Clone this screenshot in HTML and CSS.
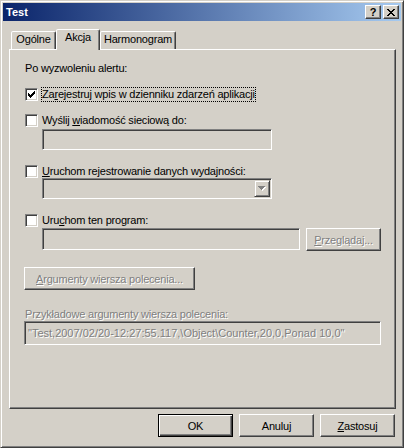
FILE: index.html
```
<!DOCTYPE html>
<html lang="pl">
<head>
    <meta charset="UTF-8">
    <title>Test</title>
    <link rel="stylesheet" href="styles.css">
</head>
<body>
    <div class="window">
        <div class="titlebar">
            <span class="title">Test</span>
            <div class="caption-buttons">
                <button class="cap-btn">?</button>
                <button class="cap-btn">
                    <svg width="8" height="7" viewBox="0 0 8 7"><path d="M0 0h2v1h-2z M6 0h2v1h-2z M1 1h2v1h-2z M5 1h2v1h-2z M2 2h4v1h-4z M3 3h2v1h-2z M2 4h4v1h-4z M1 5h2v1h-2z M5 5h2v1h-2z M0 6h2v1h-2z M6 6h2v1h-2z" fill="#000"/></svg>
                </button>
            </div>
        </div>

        <div class="tabs">
            <div class="tab tab-general">Ogólne</div>
            <div class="tab tab-action active">Akcja</div>
            <div class="tab tab-schedule">Harmonogram</div>
        </div>

        <div class="panel">
            <div class="intro">Po wyzwoleniu alertu:</div>

            <div class="check first">
                <span class="box">
                    <svg width="7" height="7" viewBox="0 0 7 7"><path d="M0 2h1v3h-1z M1 3h1v3h-1z M2 4h1v3h-1z M3 3h1v3h-1z M4 2h1v3h-1z M5 1h1v3h-1z M6 0h1v3h-1z" fill="#000"/></svg>
                </span>
                <span class="check-label focused">Za<u>r</u>ejestruj wpis w dzienniku zdarzeń aplikacji</span>
            </div>

            <div class="check next">
                <span class="box"></span>
                <span class="check-label">Wyślij <u>w</u>iadomość sieciową do:</span>
            </div>
            <div class="field message-field"></div>

            <div class="check group">
                <span class="box"></span>
                <span class="check-label"><u>U</u>ruchom rejestrowanie danych wydajności:</span>
            </div>
            <div class="field combo">
                <span class="combo-btn">
                    <svg width="8" height="5" viewBox="0 0 8 5"><path d="M1 1h7v1h-1v1h-1v1h-1v1h-1v-1h-1v-1h-1v-1h-1z" fill="#fff"/><path d="M0 0h7v1h-1v1h-1v1h-1v1h-1v-1h-1v-1h-1v-1h-1z" fill="#808080"/></svg>
                </span>
            </div>

            <div class="check group">
                <span class="box"></span>
                <span class="check-label">Uru<u>c</u>hom ten program:</span>
            </div>
            <div class="program-row">
                <div class="field program-field"></div>
                <button class="btn" disabled><u>P</u>rzeglądaj...</button>
            </div>

            <button class="btn args-btn" disabled><u>A</u>rgumenty wiersza polecenia...</button>

            <div class="sample-label">Przykładowe argumenty wiersza polecenia:</div>
            <div class="field sample-field">"Test,2007/02/20-12:27:55.117,\Object\Counter,20,0,Ponad 10,0"</div>
        </div>

        <div class="actions">
            <button class="btn default">OK</button>
            <button class="btn">Anuluj</button>
            <button class="btn"><u>Z</u>astosuj</button>
        </div>
    </div>
</body>
</html>
```

FILE: styles.css
```
* {
    box-sizing: border-box;
}
body {
    margin: 0;
    font-family: 'Liberation Sans', Arial, sans-serif;
    font-size: 11px;
    letter-spacing: -0.2px;
    color: #000;
    background: #d4d0c8;
}
.window {
    width: 404px;
    height: 448px;
    padding: 2px;
    background: #d4d0c8;
    border: 1px solid;
    border-color: #d4d0c8 #404040 #404040 #d4d0c8;
    box-shadow: inset 1px 1px #fff, inset -1px -1px #808080;
}
.titlebar {
    height: 18px;
    display: flex;
    align-items: center;
    justify-content: space-between;
    padding: 0 2px 0 3px;
    background: linear-gradient(to right, #0a246a, #a6caf0);
}
.title {
    color: #fff;
    font-weight: bold;
    letter-spacing: 0;
}
.caption-buttons {
    display: flex;
    gap: 2px;
}
.cap-btn {
    width: 16px;
    height: 14px;
    padding: 0;
    display: flex;
    align-items: center;
    justify-content: center;
    background: #d4d0c8;
    border: 1px solid;
    border-color: #fff #404040 #404040 #fff;
    box-shadow: inset -1px -1px #808080;
    font: bold 11px 'Liberation Sans', Arial, sans-serif;
    line-height: 12px;
}

/* tab strip */
.tabs {
    display: flex;
    align-items: flex-end;
    height: 20px;
    margin: 8px 0 0 8px;
    position: relative;
    z-index: 1;
}
.tab {
    height: 18px;
    padding-top: 1px;
    line-height: 13px;
    text-align: center;
    background: #d4d0c8;
    border: 1px solid;
    border-bottom: none;
    border-color: #fff #404040 transparent #fff;
    border-radius: 2px 2px 0 0;
    box-shadow: inset -1px 0 #808080;
}
.tab-general { width: 45px; }
.tab-action { width: 44px; }
.tab-schedule { width: 76px; }
.tab.active {
    height: 21px;
    margin-bottom: -1px;
}

.panel {
    width: 387px;
    height: 360px;
    margin-left: 6px;
    padding-left: 15px;
    border: 1px solid;
    border-color: #fff #404040 #404040 #fff;
    box-shadow: inset -1px -1px #808080;
}
.intro {
    margin-top: 12px;
    line-height: 13px;
}

/* checkboxes */
.check {
    display: flex;
    align-items: center;
    height: 13px;
    gap: 3px;
}
.check.first { margin-top: 13px; }
.check.next { margin-top: 13px; }
.check.group { margin-top: 15px; }
.box {
    width: 13px;
    height: 13px;
    display: flex;
    align-items: center;
    justify-content: center;
    background: #fff;
    border: 1px solid;
    border-color: #808080 #fff #fff #808080;
    box-shadow: inset 1px 1px #404040, inset -1px -1px #d4d0c8;
}
.check-label {
    padding: 1px;
    line-height: 13px;
}
.check-label.focused {
    outline: 1px dotted #000;
    outline-offset: -1px;
}

/* sunken fields */
.field {
    height: 21px;
    background: #d4d0c8;
    border: 1px solid;
    border-color: #808080 #fff #fff #808080;
    box-shadow: inset 1px 1px #404040, inset -1px -1px #d4d0c8;
}
.message-field {
    width: 230px;
    margin: 2px 0 0 17px;
}
.combo {
    width: 230px;
    margin-left: 17px;
    padding: 1px;
    display: flex;
    justify-content: flex-end;
}
.combo-btn {
    width: 16px;
    height: 17px;
    display: flex;
    align-items: center;
    justify-content: center;
    border: 1px solid;
    border-color: #d4d0c8 #404040 #404040 #d4d0c8;
    box-shadow: inset 1px 1px #fff, inset -1px -1px #808080;
}
.program-row {
    display: flex;
    gap: 6px;
    margin: 1px 0 0 17px;
}
.program-field {
    width: 258px;
    height: 22px;
}

/* buttons */
.btn {
    width: 75px;
    height: 23px;
    padding: 0;
    font: 11px 'Liberation Sans', Arial, sans-serif;
    letter-spacing: -0.2px;
    color: #000;
    background: #d4d0c8;
    border: 1px solid;
    border-color: #fff #404040 #404040 #fff;
    box-shadow: inset -1px -1px #808080;
}
.btn:disabled {
    color: #808080;
    text-shadow: 1px 1px #fff;
}
.btn.default {
    border-color: #000;
    box-shadow: inset 1px 1px #fff, inset -1px -1px #404040, inset -2px -2px #808080;
}
.args-btn {
    display: block;
    width: 171px;
    margin: 16px 0 0 -1px;
}
.sample-label {
    margin-top: 18px;
    line-height: 13px;
    color: #808080;
    text-shadow: 1px 1px #fff;
}
.sample-field {
    width: 357px;
    height: 24px;
    margin-left: -1px;
    padding: 0 3px;
    line-height: 22px;
    letter-spacing: 0;
    color: #808080;
    text-shadow: 1px 1px #fff;
    white-space: nowrap;
}

.actions {
    display: flex;
    justify-content: flex-end;
    gap: 6px;
    margin-top: 5px;
    padding-right: 6px;
}
```
